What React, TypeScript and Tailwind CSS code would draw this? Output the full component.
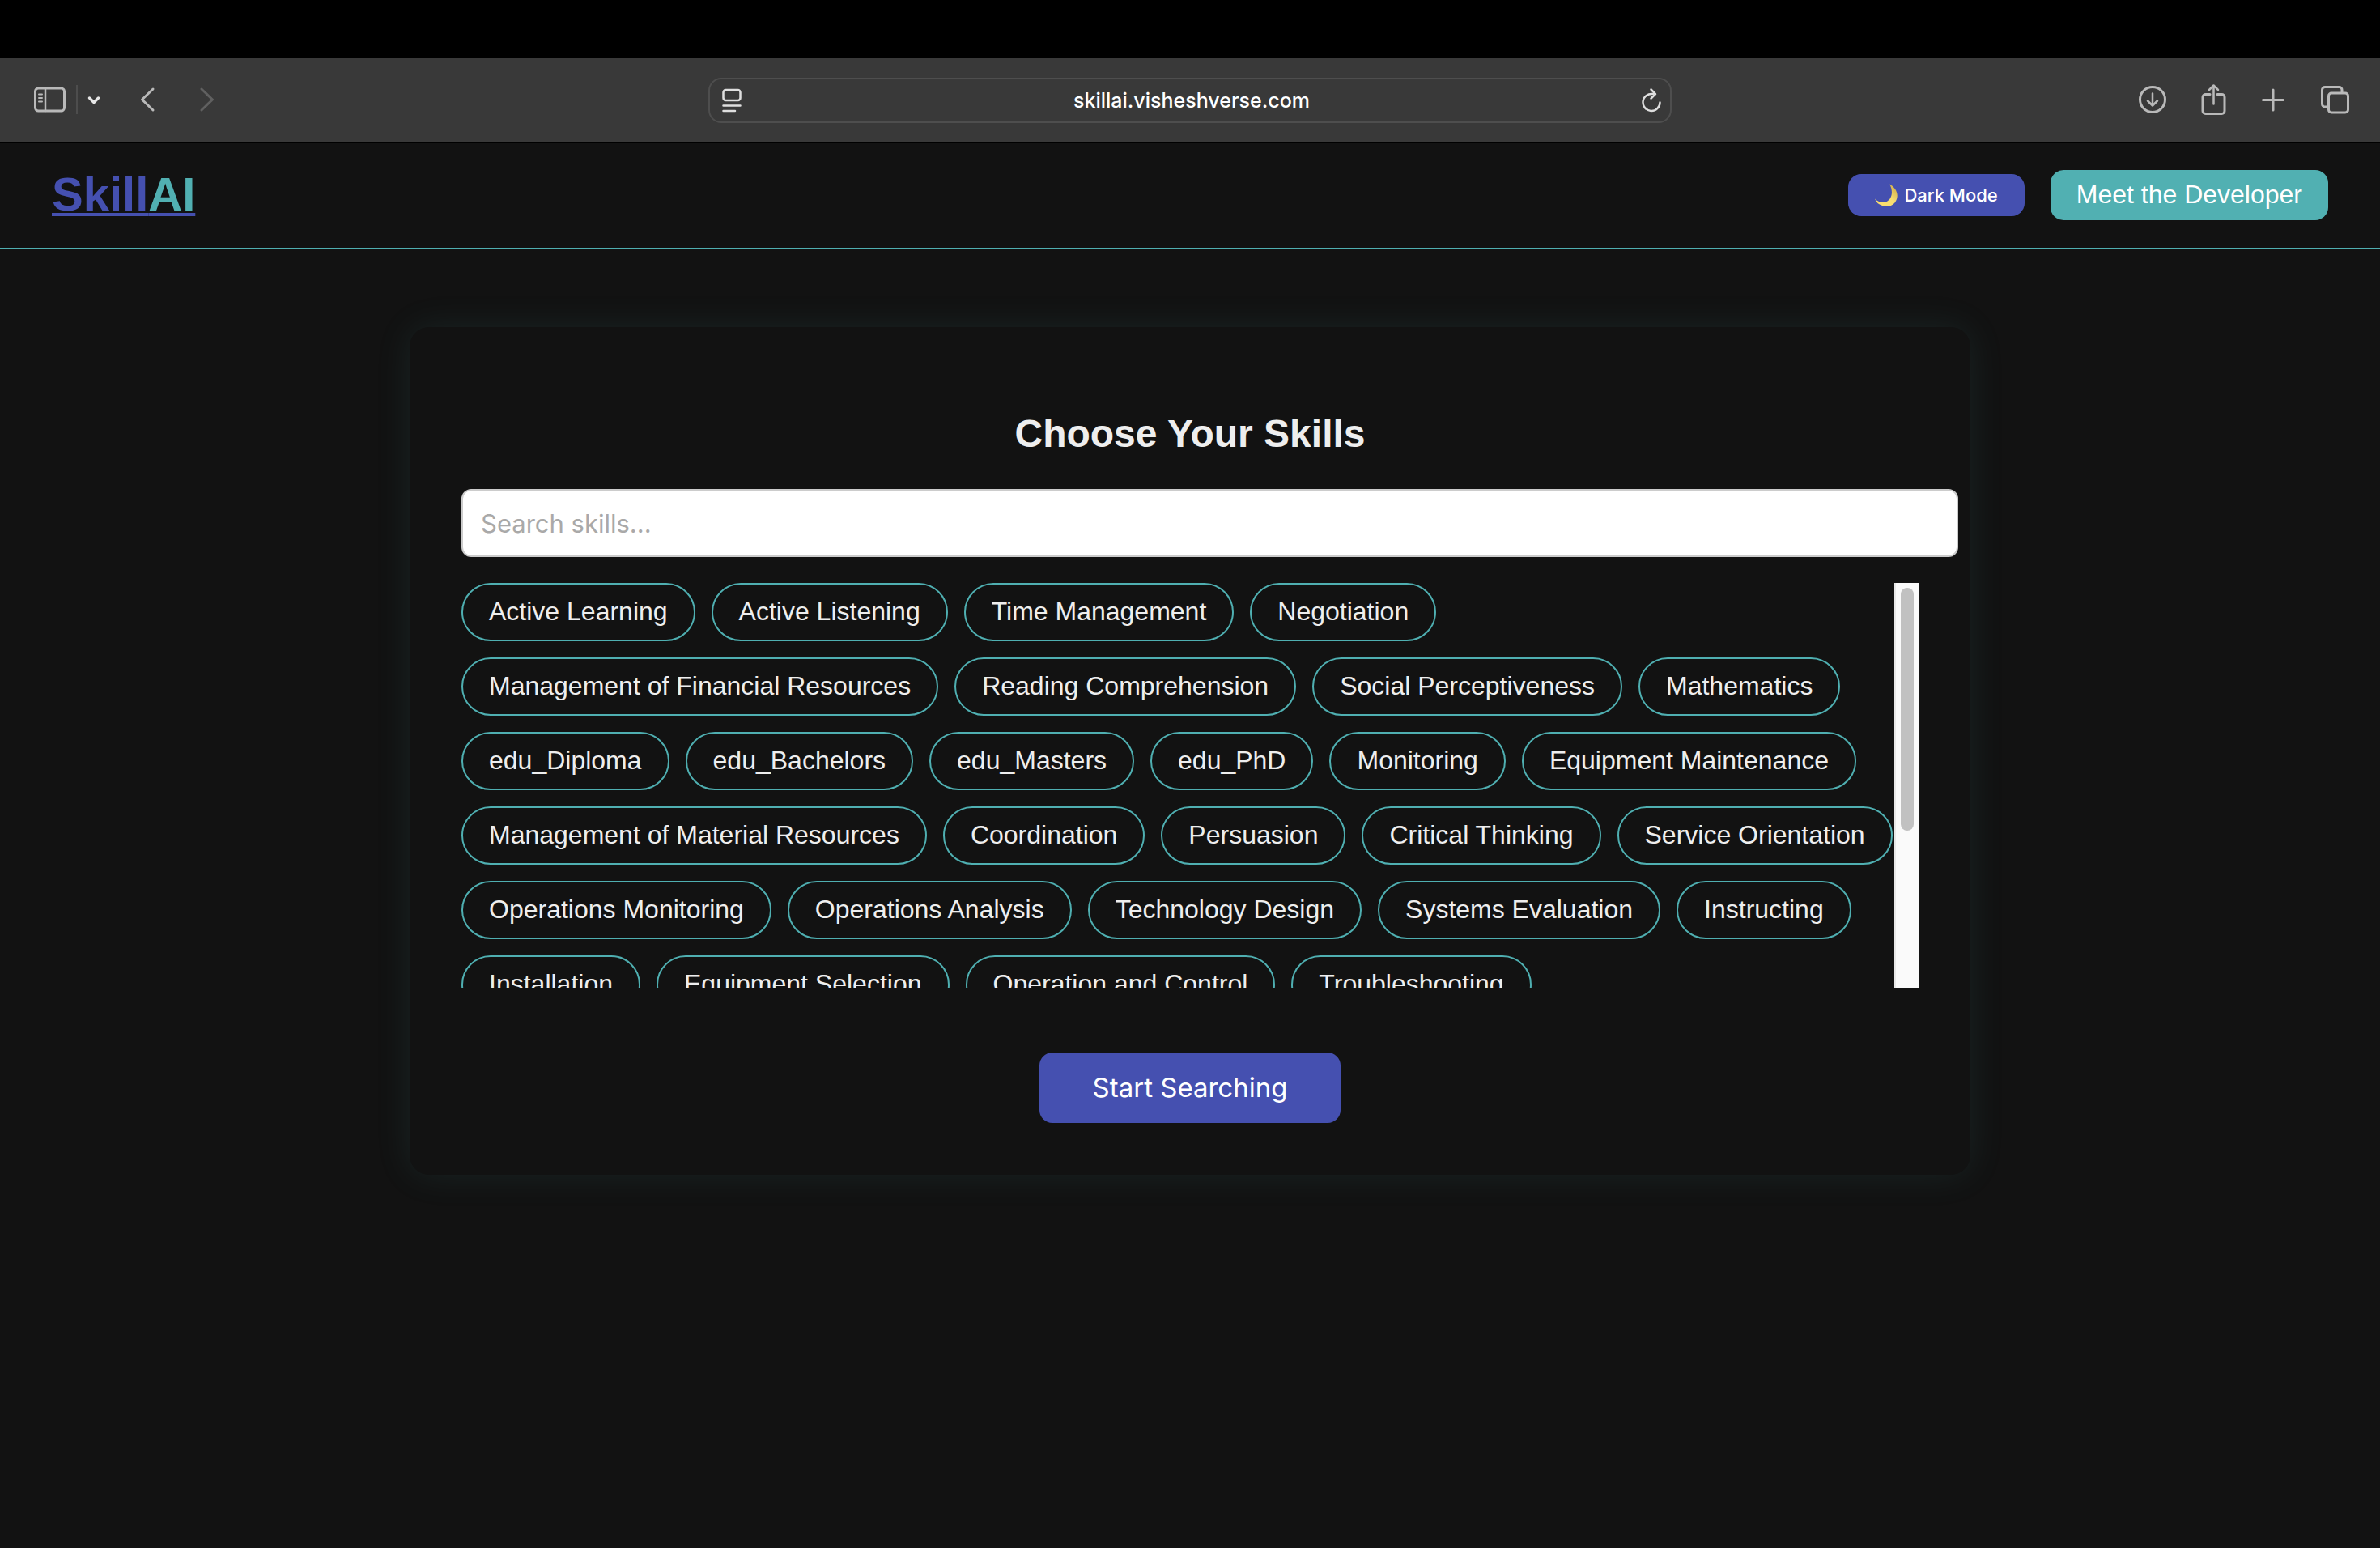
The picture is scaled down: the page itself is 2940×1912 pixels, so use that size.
import type { ReactNode } from 'react';

const skills = [
  'Active Learning', 'Active Listening', 'Time Management', 'Negotiation',
  'Management of Financial Resources', 'Reading Comprehension', 'Social Perceptiveness', 'Mathematics',
  'edu_Diploma', 'edu_Bachelors', 'edu_Masters', 'edu_PhD', 'Monitoring', 'Equipment Maintenance',
  'Management of Material Resources', 'Coordination', 'Persuasion', 'Critical Thinking', 'Service Orientation',
  'Operations Monitoring', 'Operations Analysis', 'Technology Design', 'Systems Evaluation', 'Instructing',
  'Installation', 'Equipment Selection', 'Operation and Control', 'Troubleshooting',
];

function Glyph({ label, w, h, className = '', children }: { label: string; w: number; h: number; className?: string; children: ReactNode }) {
  return (
    <button type="button" aria-label={label} className={'shrink-0 ' + className}>
      <svg width={w} height={h} viewBox={`0 0 ${w} ${h}`} fill="none" stroke="currentColor" strokeWidth="3" strokeLinecap="round" strokeLinejoin="round" className="block">
        {children}
      </svg>
    </button>
  );
}

function Toolbar() {
  return (
    <div className="grid h-[105px] grid-cols-[1fr_1190px_1fr] items-center border-b border-black bg-[#393939] px-9 text-[#b9b9b9]">
      <div className="flex items-center pb-0.5 pl-0.5">
        <Glyph label="Sidebar" w={46} h={36}>
          <rect x="5.500" y="4" width="36" height="28" rx="4" />
          <path d="M18 4v28" strokeWidth="2.500" />
          <path d="M10 11.500h4M10 16h4M10 20.500h4" strokeWidth="2" />
        </Glyph>
        <span className="ml-2.5 h-9 w-0.5 bg-[#4d4d4d]" />
        <Glyph label="Tab groups" w={22} h={20} className="ml-2 text-[#e6e6e6]">
          <path d="M6.500 8 12 13.500 17.500 8" strokeWidth="3.500" />
        </Glyph>
        <Glyph label="Back" w={24} h={36} className="ml-[46px]">
          <path d="M17 5 3.500 18 17 31" />
        </Glyph>
        <Glyph label="Forward" w={24} h={36} className="ml-12 text-[#606060]">
          <path d="M5 5 18.500 18 5 31" />
        </Glyph>
      </div>
      <div className="flex h-14 items-center justify-between rounded-2xl border-2 border-[#4e4e4e] pr-2.5 pl-3.5 text-[#dedede]">
        <Glyph label="Reader" w={26} h={32}>
          <rect x="2.500" y="3" width="21" height="13" rx="3" strokeWidth="2.500" />
          <path d="M2.500 22.500h21M2.500 29h14.500" strokeWidth="2.500" />
        </Glyph>
        <span className="font-['Inter'] text-[25px] leading-8 font-medium text-white">skillai.visheshverse.com</span>
        <Glyph label="Reload" w={26} h={32}>
          <path d="M15 8.100A10.500 10.500 0 1 0 23.500 18.400" strokeWidth="2.500" />
          <path d="M12.500 2.500 18 8.100 12.500 13.700" strokeWidth="2.500" />
        </Glyph>
      </div>
      <div className="flex items-center justify-end pb-0.5">
        <Glyph label="Downloads" w={38} h={38}>
          <circle cx="19" cy="19" r="15.500" />
          <path d="M19 11.500v15M13 20.500l6 6 6-6" strokeWidth="2.500" />
        </Glyph>
        <Glyph label="Share" w={34} h={42} className="ml-10">
          <path d="M12 14.500H6.500a3.500 3.500 0 0 0-3.500 3.500v17a3.500 3.500 0 0 0 3.500 3.500h20a3.500 3.500 0 0 0 3.500-3.500V18a3.500 3.500 0 0 0-3.500-3.500H21" />
          <path d="M16.500 26.500V4M11 9l5.500-5.500L22 9" strokeWidth="2.500" />
        </Glyph>
        <Glyph label="New tab" w={32} h={32} className="ml-10">
          <path d="M16 4v25M3.500 16.500h25" />
        </Glyph>
        <Glyph label="Tabs" w={40} h={40} className="ml-10">
          <path d="M10.500 29H8a3.500 3.500 0 0 1-3.500-3.500V8A3.500 3.500 0 0 1 8 4.500h17.500A3.500 3.500 0 0 1 29 8v3" />
          <rect x="12.500" y="12" width="24" height="24" rx="3.500" />
        </Glyph>
      </div>
    </div>
  );
}

function Moon() {
  return (
    <svg width="28" height="36" viewBox="0 0 28 36" className="shrink-0" aria-hidden="true">
      <defs>
        <linearGradient id="moon" x1="0" y1="1" x2="1" y2="0">
          <stop offset="0" stopColor="#ffe06b" />
          <stop offset="0.550" stopColor="#f6dc72" />
          <stop offset="1" stopColor="#c9a23c" />
        </linearGradient>
      </defs>
      <path d="M18 4.500C25 8 29.500 15.500 27 23 24.500 30.500 17 33.500 10.500 31.500 5 30 1.500 27 0 22.500c4 4.500 10.500 6 15.500 3C22 21.500 22.500 11.500 18 4.500Z" fill="url(#moon)" />
    </svg>
  );
}

export default function App() {
  return (
    <div className="min-h-screen bg-[#121212] font-['Liberation_Sans',sans-serif] text-[#eeeeee]">
      <div className="h-[72px] bg-black" />
      <Toolbar />
      <header className="flex items-center justify-between border-b-2 border-[#4fafb1] px-16 pt-8 pb-[33px]">
        <a href="#" className="pb-0.5 text-[58px] leading-[62px] font-bold text-[#4550b0] underline decoration-4 underline-offset-[3px]">
          Skill<span className="text-[#51b0b2]">AI</span>
        </a>
        <div className="flex items-center gap-8">
          <button type="button" className="flex h-[52px] items-center gap-2 rounded-2xl bg-[#4550b0] px-[33px] font-['Inter'] text-[22px] font-medium text-white">
            <Moon />
            Dark Mode
          </button>
          <a href="#" className="rounded-2xl bg-[#51b0b2] px-8 pt-[11px] pb-[13px] text-[32px] leading-[38px] text-white">Meet the Developer</a>
        </div>
      </header>
      <main className="mx-auto mt-24 flex max-w-[1928px] flex-col items-center rounded-3xl p-16 shadow-[0_0_45px_rgba(79,175,177,0.110)]">
        <h1 className="mt-10 text-[48px] leading-14 font-bold">Choose Your Skills</h1>
        <div className="mt-10 w-full">
          <input
            type="text"
            aria-label="Search skills"
            placeholder="Search skills..."
            className="block h-[84px] w-[calc(100%+49px)] rounded-xl border-2 border-[#cccccc] bg-white px-[22px] font-['Inter'] text-[31px] text-black placeholder:text-[#a9a9a9]"
          />
        </div>
        <div className="mt-8 flex h-[500px] w-full">
          <div className="flex flex-1 flex-wrap content-start gap-5 overflow-y-auto [scrollbar-width:none]">
            {skills.map((s) => (
              <button key={s} type="button" className="h-[72px] rounded-full border-2 border-[#4fafb1] px-8 pb-0.5 text-[32px] leading-9 whitespace-nowrap">
                {s}
              </button>
            ))}
          </div>
          <div className="flex w-[30px] justify-center border-l-2 border-[#e8e8e8] bg-[#fafafa] py-1.5">
            <div className="h-[300px] w-4 rounded-full bg-[#c1c1c1]" />
          </div>
        </div>
        <button type="button" className="mt-20 h-[87px] rounded-2xl bg-[#4550b0] px-[66px] font-['Inter'] text-[33px] text-white">Start Searching</button>
      </main>
    </div>
  );
}
